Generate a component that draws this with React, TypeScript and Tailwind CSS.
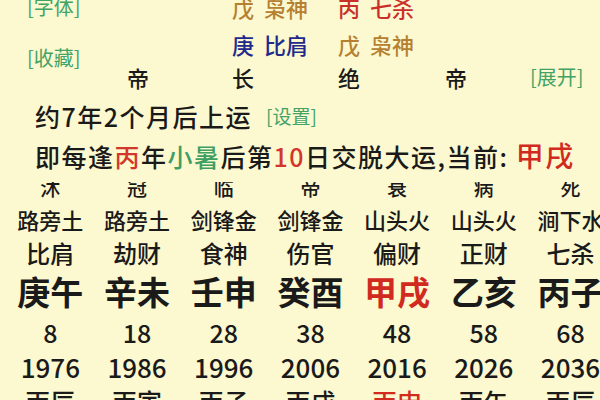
const CHANGSHENG = ['沐', '冠', '临', '帝', '衰', '病', '死']
const NAYIN = ['路旁土', '路旁土', '剑锋金', '剑锋金', '山头火', '山头火', '涧下水']
const SHISHEN = ['比肩', '劫财', '食神', '伤官', '偏财', '正财', '七杀']
const DAYUN = ['庚午', '辛未', '壬申', '癸酉', '甲戌', '乙亥', '丙子']
const AGES = [8, 18, 28, 38, 48, 58, 68]
const YEARS = [1976, 1986, 1996, 2006, 2016, 2026, 2036]
const LIUNIAN = ['丙辰', '丙寅', '丙子', '丙戌', '丙申', '丙午', '丙辰']

// index of the current luck pillar (甲戌)
const CURRENT = 4

function Row({
  items,
  className,
  highlight = false,
}: {
  items: (string | number)[]
  className: string
  highlight?: boolean
}) {
  return (
    <div className={`grid grid-cols-[repeat(7,86.7px)] pl-[7px] ${className}`}>
      {items.map((item, i) => (
        <div
          key={i}
          className={`whitespace-nowrap text-center ${highlight && i === CURRENT ? 'text-[#d12a1f]' : ''}`}
        >
          {item}
        </div>
      ))}
    </div>
  )
}

export default function App() {
  return (
    <div className="h-[400px] w-[600px] overflow-hidden bg-[#fcf8cf] font-['Noto_Sans_CJK_SC',sans-serif] font-medium text-[#1a1a1a]">
      {/* Pillar header: hidden stems + 长生 */}
      <div className="-mt-[11px] flex">
        <div className="flex w-[127px] flex-col pl-[27px] text-[20px] font-normal text-[#43a366]">
          <div className="h-[36px] leading-[36px]">[字体]</div>
          <div className="mt-[18px] h-[30px] leading-[30px]">[收藏]</div>
        </div>
        <div className="grid grid-cols-[105px_106px_107px_85px_auto] grid-rows-[37px_36px_30px] whitespace-nowrap text-[22px]">
          <div />
          <div className="flex gap-[10px] leading-[37px] text-[#b5802f]">
            <span>戊</span>
            <span>枭神</span>
          </div>
          <div className="flex gap-[10px] leading-[37px] text-[#c9302a]">
            <span>丙</span>
            <span>七杀</span>
          </div>
          <div />
          <div />

          <div />
          <div className="flex gap-[10px] leading-[36px] text-[#1f2a8c]">
            <span>庚</span>
            <span>比肩</span>
          </div>
          <div className="flex gap-[10px] leading-[36px] text-[#b5802f]">
            <span>戊</span>
            <span>枭神</span>
          </div>
          <div />
          <div />

          <div className="leading-[30px]">帝</div>
          <div className="leading-[30px]">长</div>
          <div className="leading-[30px]">绝</div>
          <div className="leading-[30px]">帝</div>
          <div className="text-[20px] font-normal leading-[30px] text-[#43a366]">[展开]</div>
        </div>
      </div>

      {/* Start of luck */}
      <div className="mt-[4px] flex h-[40px] items-center pl-[35px] leading-[40px]">
        <span className="text-[25px] tracking-[1.5px]">约7年2个月后上运</span>
        <span className="ml-[14px] text-[19px] font-normal text-[#43a366]">[设置]</span>
      </div>
      <div className="h-[38px] whitespace-nowrap pl-[35px] text-[25px] leading-[38px] tracking-[1.5px]">
        即每逢<span className="text-[#d3372b]">丙</span>年
        <span className="text-[#3f9e62]">小暑</span>后第
        <span className="text-[#d3372b]">10</span>日交脱大运,当前:{' '}
        <span className="text-[28px] text-[#d12a1f]">甲戌</span>
      </div>

      {/* Luck pillars table */}
      <div className="mt-[8px] h-[18px] overflow-hidden">
        <Row items={CHANGSHENG} className="-mt-[4px] text-[20px] leading-[20px]" />
      </div>
      <Row items={NAYIN} className="h-[38px] text-[22px] leading-[38px]" />
      <Row items={SHISHEN} className="h-[30px] text-[24px] leading-[30px]" />
      <Row items={DAYUN} className="h-[46px] text-[33px] font-bold leading-[46px]" highlight />
      <Row items={AGES} className="h-[36px] text-[25px] leading-[36px]" />
      <Row items={YEARS} className="h-[33px] text-[26px] leading-[33px]" />
      <Row items={LIUNIAN} className="h-[37px] text-[25px] leading-[37px]" highlight />
    </div>
  )
}
